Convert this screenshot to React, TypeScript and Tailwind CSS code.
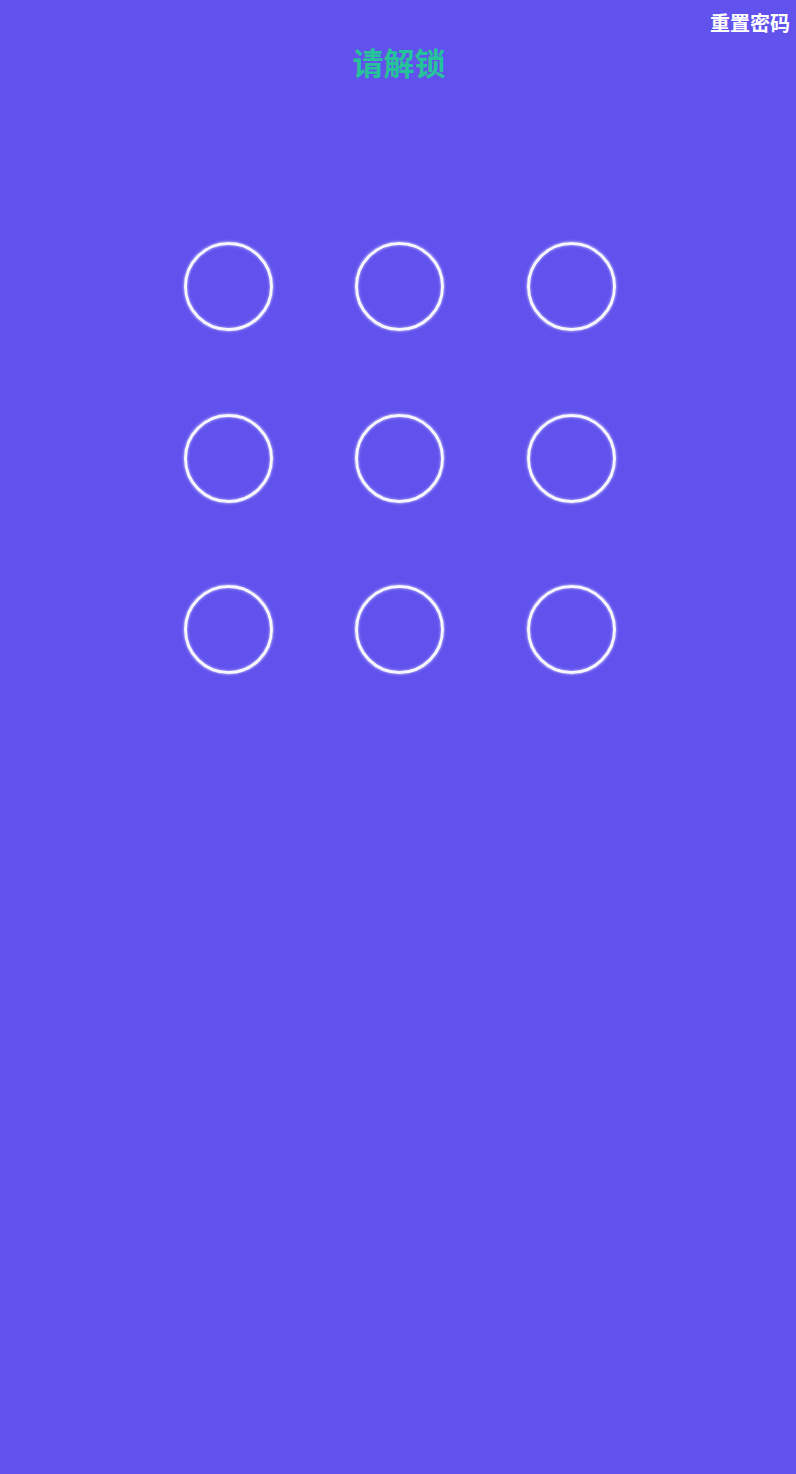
import React from "react";

export default function App() {
  const dots = Array.from({ length: 9 });
  return (
    <div className="w-[796px] h-[1474px] bg-[#6152EE] relative" style={{ fontFamily: '"Noto Sans CJK SC", sans-serif' }}>
      <div className="flex justify-end pr-[6px] pt-[9px]">
        <span className="text-white text-[20px] font-bold leading-[28px]">重置密码</span>
      </div>
      <div className="flex justify-center mt-[5px] pl-[2px]">
        <h1 className="text-[#26c29a] text-[31px] font-bold leading-[40px]">请解锁</h1>
      </div>
      <div className="flex justify-center mt-[160px] pl-[3px]">
        <div className="grid grid-cols-[89px_89px_89px] gap-x-[82.5px] gap-y-[82.5px]">
          {dots.map((_, i) => (
            <div
              key={i}
              className="w-[89px] h-[89px] rounded-full border-[3px] border-white/95 shadow-[0_0_3px_rgba(255,255,255,0.85),inset_0_0_3px_rgba(255,255,255,0.6)]"
            />
          ))}
        </div>
      </div>
    </div>
  );
}
